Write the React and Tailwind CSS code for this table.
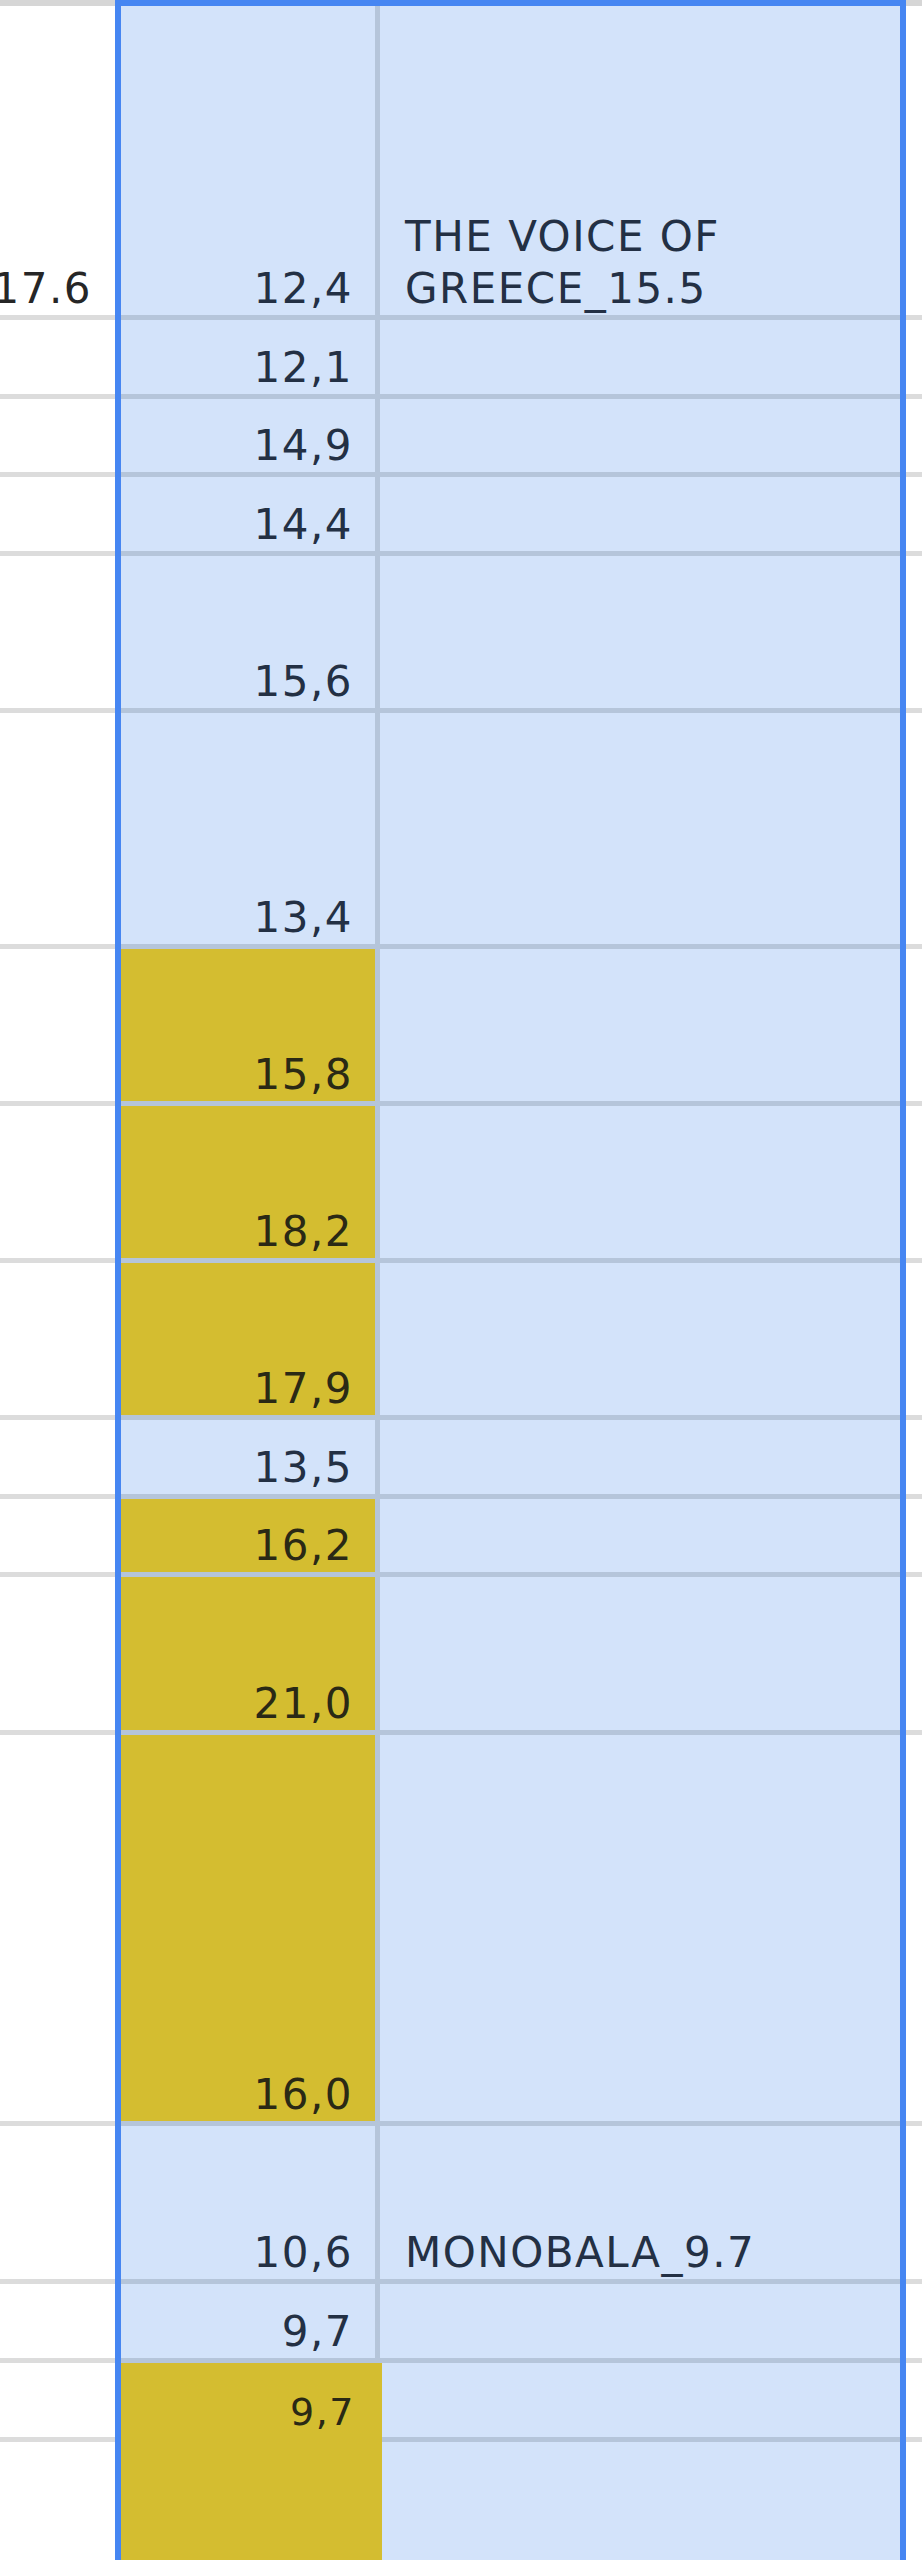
const rows = [
  { h: 'h-[314px]', b: '12,4', c: 'THE VOICE OF GREECE_15.5', a: '17.6' },
  { h: 'h-[79px]', b: '12,1' },
  { h: 'h-[78px]', b: '14,9' },
  { h: 'h-[79px]', b: '14,4' },
  { h: 'h-[157px]', b: '15,6' },
  { h: 'h-[236px]', b: '13,4' },
  { h: 'h-[157px]', b: '15,8', y: true },
  { h: 'h-[157px]', b: '18,2', y: true },
  { h: 'h-[157px]', b: '17,9', y: true },
  { h: 'h-[79px]', b: '13,5' },
  { h: 'h-[78px]', b: '16,2', y: true },
  { h: 'h-[158px]', b: '21,0', y: true },
  { h: 'h-[391px]', b: '16,0', y: true },
  { h: 'h-[158px]', b: '10,6', c: 'MONOBALA_9.7' },
  { h: 'h-[79px]', b: '9,7' },
  { h: 'h-[79px]' },
]

function SideColumn({ width, showText }) {
  return (
    <div className={`${width} shrink-0 flex flex-col`}>
      <div className="h-[6px] shrink-0 bg-[#d6d6d6]" />
      {rows.map((r, i) => (
        <div
          key={i}
          className={`${r.h} shrink-0 border-b-[5px] border-[#dcdcdc] flex items-end justify-end pr-[23px] text-[42px] leading-[52px] tracking-[1.5px] whitespace-nowrap text-[#262626]`}
        >
          {showText && r.a}
        </div>
      ))}
    </div>
  )
}

export default function App() {
  const main = rows.slice(0, 15)

  return (
    <div className="flex h-[2560px] w-[922px] overflow-hidden bg-white font-['DejaVu_Sans',Verdana,sans-serif]">
      <SideColumn width="w-[115px]" showText />

      <div className="w-[791px] shrink-0 border-[6px] border-b-0 border-[#4686f2] bg-[#d3e3fa] flex flex-col">
        {main.map((r, i) => (
          <div key={i} className={`${r.h} shrink-0 flex border-b-[5px] border-[#b5c5da]`}>
            <div
              className={`w-[259px] shrink-0 border-r-[5px] border-[#b5c5da] flex items-end justify-end pr-[22px] text-[42px] leading-[52px] tracking-[1.5px] whitespace-nowrap ${
                r.y ? 'bg-[#d4bd30] text-[#2a2915]' : 'text-[#233044]'
              }`}
            >
              {r.b}
            </div>
            <div className="flex-1 flex items-end pl-[25px] pr-4 text-[42px] leading-[52px] tracking-[1.5px] text-[#233044]">
              {r.c}
            </div>
          </div>
        ))}

        <div className="flex flex-1">
          <div className="w-[261px] shrink-0 bg-[#d4bd30] pt-[26px] pr-[27px] text-right text-[38px] leading-[46px] tracking-[1.5px] text-[#2a2915]">
            9,7
          </div>
          <div className="flex-1 flex flex-col">
            <div className="h-[79px] shrink-0 border-b-[5px] border-[#b5c5da]" />
            <div className="flex-1" />
          </div>
        </div>
      </div>

      <SideColumn width="flex-1" />
    </div>
  )
}
